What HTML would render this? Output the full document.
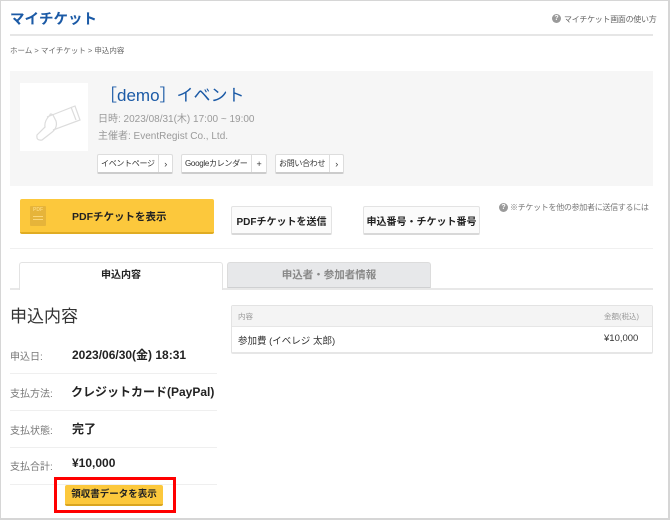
<!DOCTYPE html>
<html><head><meta charset="utf-8"><style>
*{box-sizing:border-box;margin:0;padding:0}
body{width:670px;height:520px;position:relative;background:#fff;font-family:"Liberation Sans","Noto Sans CJK JP",sans-serif;overflow:hidden}
.a{position:absolute;white-space:nowrap}
.frame{position:absolute;left:0;top:0;width:670px;height:520px;border:1px solid #d6d6d6;border-right-width:2px;border-bottom-width:2px}
.btn{position:absolute;background:#fff;border:1px solid #ddd;border-bottom:2px solid #ccc;border-radius:2px;font-size:8px;color:#333;display:flex;align-items:center;white-space:nowrap;letter-spacing:-0.3px}
.btn span{padding:0 3px;white-space:nowrap}
.btn i{font-style:normal;border-left:1px solid #ddd;height:100%;display:flex;align-items:center;padding:0 5px;font-size:9px}
.wb{position:absolute;background:#fbfbfb;border:1px solid #e3e3e3;border-bottom:2px solid #d8d8d8;border-radius:2px;font-size:10px;font-weight:bold;color:#222;display:flex;align-items:center;justify-content:center}
.lbl{position:absolute;left:10px;font-size:10px;color:#777}
.val{position:absolute;font-size:12px;font-weight:bold;color:#222}
.sep{position:absolute;left:10px;width:207px;height:1px;background:#efefef}
</style></head><body>
<div class="frame"></div>
<div class="a" style="left:10px;top:8px;font-size:14.5px;font-weight:bold;color:#1b5aa6">マイチケット</div>
<div class="a" style="left:552px;top:14px;width:9px;height:9px;border-radius:50%;background:#9a9a9a;color:#fff;font-size:7px;text-align:center;line-height:9px;font-weight:bold">?</div>
<div class="a" style="left:564px;top:14px;font-size:8px;color:#666;letter-spacing:-0.3px">マイチケット画面の使い方</div>
<div class="a" style="left:10px;top:34px;width:643px;height:2px;background:#e6e6e6"></div>
<div class="a" style="left:10px;top:45px;font-size:7.5px;color:#666">ホーム &gt; マイチケット &gt; 申込内容</div>

<div class="a" style="left:10px;top:71px;width:643px;height:115px;background:#f6f6f6"></div>
<div class="a" style="left:20px;top:83px;width:68px;height:68px;background:#fff">
<svg width="68" height="68" viewBox="0 0 68 68" fill="none" stroke="#dcdcdc" stroke-width="1.2"><path d="M27 34 L55 23 L60 37 L33 47"/><path d="M51 24 L56 37"/><path d="M30 32 Q24 38 25 44 L17 52 Q16 58 22 57 L31 50 Q38 45 36 38 L33 32 Q30 30 30 32Z"/></svg>
</div>
<div class="a" style="left:100px;top:81px;font-size:17px;color:#1b5aa6">［demo］イベント</div>
<div class="a" style="left:98px;top:110px;font-size:10px;color:#9a9a9a">日時: 2023/08/31(木) 17:00 ~ 19:00</div>
<div class="a" style="left:98px;top:127px;font-size:10px;color:#9a9a9a">主催者: EventRegist Co., Ltd.</div>
<div class="btn" style="left:97px;top:154px;width:76px;height:20px"><span style="flex:1">イベントページ</span><i>›</i></div>
<div class="btn" style="left:181px;top:154px;width:86px;height:20px"><span style="flex:1">Googleカレンダー</span><i>+</i></div>
<div class="btn" style="left:275px;top:154px;width:69px;height:20px"><span style="flex:1">お問い合わせ</span><i>›</i></div>

<div class="a" style="left:20px;top:199px;width:194px;height:35px;background:#fcc83c;border-radius:2px;border-bottom:2px solid #e0ac22"></div>
<div class="a" style="left:30px;top:206px;width:16px;height:20px;background:#e6b43a;border-radius:1px;color:#fbd77a;font-size:5px;font-weight:bold;text-align:center;line-height:9px">PDF<div style="height:1px;background:#fbd77a;margin:1px 3px"></div><div style="height:1px;background:#fbd77a;margin:2px 3px"></div></div>
<div class="a" style="left:72px;top:209px;font-size:10.5px;font-weight:bold;color:#222">PDFチケットを表示</div>
<div class="wb" style="left:231px;top:206px;width:101px;height:29px">PDFチケットを送信</div>
<div class="wb" style="left:363px;top:206px;width:117px;height:29px">申込番号・チケット番号</div>
<div class="a" style="left:499px;top:203px;width:9px;height:9px;border-radius:50%;background:#9a9a9a;color:#fff;font-size:7px;text-align:center;line-height:9px;font-weight:bold">?</div>
<div class="a" style="left:510px;top:202px;font-size:8px;color:#777;letter-spacing:-0.3px">※チケットを他の参加者に送信するには</div>
<div class="a" style="left:10px;top:248px;width:643px;height:1px;background:#f0f0f0"></div>

<div class="a" style="left:19px;top:262px;width:204px;height:28px;background:#fff;border:1px solid #e3e3e3;border-bottom:none;border-radius:3px 3px 0 0;font-size:10px;font-weight:bold;color:#222;text-align:center;line-height:26px;z-index:2">申込内容</div>
<div class="a" style="left:227px;top:262px;width:204px;height:27px;background:#e7e8ea;border:1px solid #dcdcdc;border-bottom:2px solid #cfd0d2;border-radius:3px 3px 0 0;font-size:10.5px;font-weight:bold;color:#888;text-align:center;line-height:25px">申込者・参加者情報</div>
<div class="a" style="left:10px;top:288px;width:643px;height:2px;background:#e8e8e8"></div>

<div class="a" style="left:10px;top:302px;font-size:17px;color:#333">申込内容</div>
<div class="a" style="left:231px;top:305px;width:422px;height:49px;border:1px solid #e3e3e3;border-bottom:2px solid #e6e6e6;border-radius:2px;background:#fff"></div>
<div class="a" style="left:232px;top:306px;width:420px;height:21px;background:#f4f4f4;border-bottom:1px solid #e6e6e6"></div>
<div class="a" style="left:238px;top:311px;font-size:7.5px;color:#999">内容</div>
<div class="a" style="left:604px;top:311px;font-size:7.5px;color:#999">金額(税込)</div>
<div class="a" style="left:238px;top:333px;font-size:9.5px;color:#333">参加費 (イベレジ 太郎)</div>
<div class="a" style="left:604px;top:333px;font-size:9.5px;color:#333">¥10,000</div>

<div class="lbl" style="top:348px">申込日:</div><div class="val" style="left:72px;top:346px">2023/06/30(金) 18:31</div>
<div class="sep" style="top:373px"></div>
<div class="lbl" style="top:385px">支払方法:</div><div class="val" style="left:71px;top:383px">クレジットカード(PayPal)</div>
<div class="sep" style="top:410px"></div>
<div class="lbl" style="top:422px">支払状態:</div><div class="val" style="left:72px;top:420px">完了</div>
<div class="sep" style="top:447px"></div>
<div class="lbl" style="top:458px">支払合計:</div><div class="val" style="left:72px;top:456px">¥10,000</div>
<div class="sep" style="top:484px"></div>
<div class="a" style="left:54px;top:477px;width:122px;height:36px;border:3px solid #f00"></div>
<div class="a" style="left:65px;top:485px;width:98px;height:21px;background:#fcc83c;border-radius:2px;border-bottom:2px solid #d9a520;font-size:9.5px;font-weight:bold;color:#222;text-align:center;line-height:19px">領収書データを表示</div>
</body></html>
